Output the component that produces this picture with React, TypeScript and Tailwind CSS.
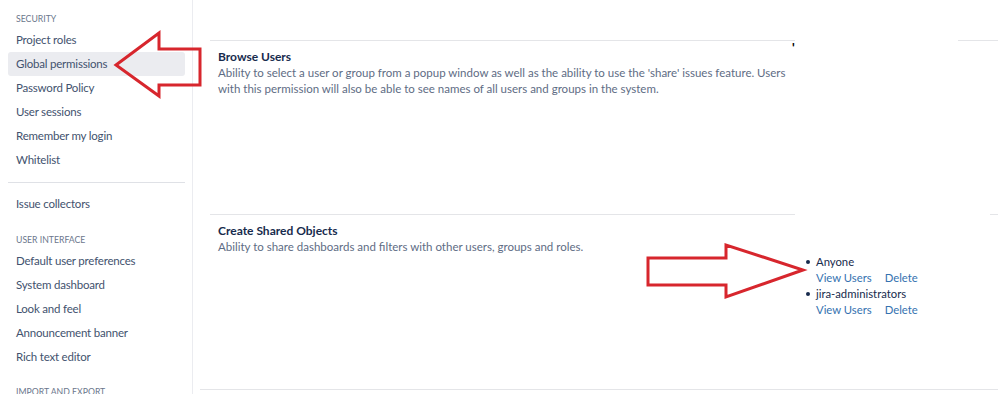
import React from 'react';

const font = { fontFamily: 'Lato, "Noto Sans", Arial, sans-serif' };

function SideItem({ label, active }: { label: string; active?: boolean }) {
  return (
    <div
      className={`h-6 flex items-center px-2 text-[11.5px] tracking-[-0.2px] text-[#42526e] rounded-[3px] ${
        active ? 'bg-[#ebecf0]' : ''
      }`}
    >
      {label}
    </div>
  );
}

function SideHeading({ label, className }: { label: string; className?: string }) {
  return (
    <div className={`px-2 text-[8.7px] uppercase text-[#6b778c] leading-3 ${className ?? ''}`}>{label}</div>
  );
}

function Sidebar() {
  return (
    <aside className="w-[193px] shrink-0 border-r border-[#ebecf0] pl-2 pr-[7px] pt-[13px] h-[394px] overflow-hidden">
      <SideHeading label="Security" />
      <div className="mt-[3px]">
        <SideItem label="Project roles" />
        <SideItem label="Global permissions" active />
        <SideItem label="Password Policy" />
        <SideItem label="User sessions" />
        <SideItem label="Remember my login" />
        <SideItem label="Whitelist" />
      </div>
      <div className="mt-[10px] mb-[9px] border-t border-[#dfe1e6]" />
      <SideItem label="Issue collectors" />
      <SideHeading label="User interface" className="mt-[18px]" />
      <div className="mt-[3px]">
        <SideItem label="Default user preferences" />
        <SideItem label="System dashboard" />
        <SideItem label="Look and feel" />
        <SideItem label="Announcement banner" />
        <SideItem label="Rich text editor" />
      </div>
      <SideHeading label="Import and export" className="mt-[17px]" />
    </aside>
  );
}

function Permission({ title, lines }: { title: string; lines: string }) {
  return (
    <div className="pt-2 pl-2">
      <div className="text-[12px] font-bold text-[#172b4d] leading-4">{title}</div>
      <p className="text-[11.5px] text-[#5e6c84] leading-4 w-[570px]">{lines}</p>
    </div>
  );
}

function GroupEntry({ name }: { name: string }) {
  return (
    <li className="flex">
      <span className="w-[11px] flex items-center h-4">
        <span className="w-[4px] h-[4px] rounded-full bg-[#172b4d] ml-[1px]" />
      </span>
      <div>
        <div className="text-[11.3px] leading-4 text-[#172b4d]">{name}</div>
        <div className="text-[11.3px] leading-4 text-[#3572b0] flex gap-[13px]">
          <span>View Users</span>
          <span>Delete</span>
        </div>
      </div>
    </li>
  );
}

export default function App() {
  return (
    <div className="relative w-[998px] h-[394px] bg-white overflow-hidden flex" style={font}>
      <Sidebar />
      <main className="flex-1 pl-[17px] pt-[40px]">
        <div className="grid grid-cols-[585px_1fr]">
          <div className="h-[174px] border-t border-[#e4e5e8] relative">
            <Permission
              title="Browse Users"
              lines="Ability to select a user or group from a popup window as well as the ability to use the 'share' issues feature. Users with this permission will also be able to see names of all users and groups in the system."
            />
            <span className="absolute left-[582px] top-[-1px] text-[13px] font-bold text-black leading-4">'</span>
          </div>
          <div className="h-[174px]">
            <div className="ml-auto w-[40px] border-t border-[#e4e5e8]" />
          </div>
          <div className="h-[175px] border-t border-[#e4e5e8]">
            <Permission
              title="Create Shared Objects"
              lines="Ability to share dashboards and filters with other users, groups and roles."
            />
          </div>
          <div className="h-[175px] relative">
            <div className="ml-auto w-[8px] border-t border-[#e4e5e8]" />
            <ul className="pl-[10px] pt-[39px]">
              <GroupEntry name="Anyone" />
              <GroupEntry name="jira-administrators" />
            </ul>
          </div>
        </div>
        <div className="border-t border-[#e4e5e8] -ml-[10px]" />
      </main>
      <svg className="absolute inset-0 pointer-events-none" width="998" height="394" viewBox="0 0 998 394">
        <polygon
          points="116,65 159,33 159,49 200,49 200,85 159,85 159,96"
          fill="none"
          stroke="#d7262d"
          strokeWidth="3"
          strokeLinejoin="miter"
        />
        <polygon
          points="648,258 726,258 726,245 803,270 726,297 726,285 648,285"
          fill="none"
          stroke="#d7262d"
          strokeWidth="3"
          strokeLinejoin="miter"
        />
      </svg>
    </div>
  );
}
